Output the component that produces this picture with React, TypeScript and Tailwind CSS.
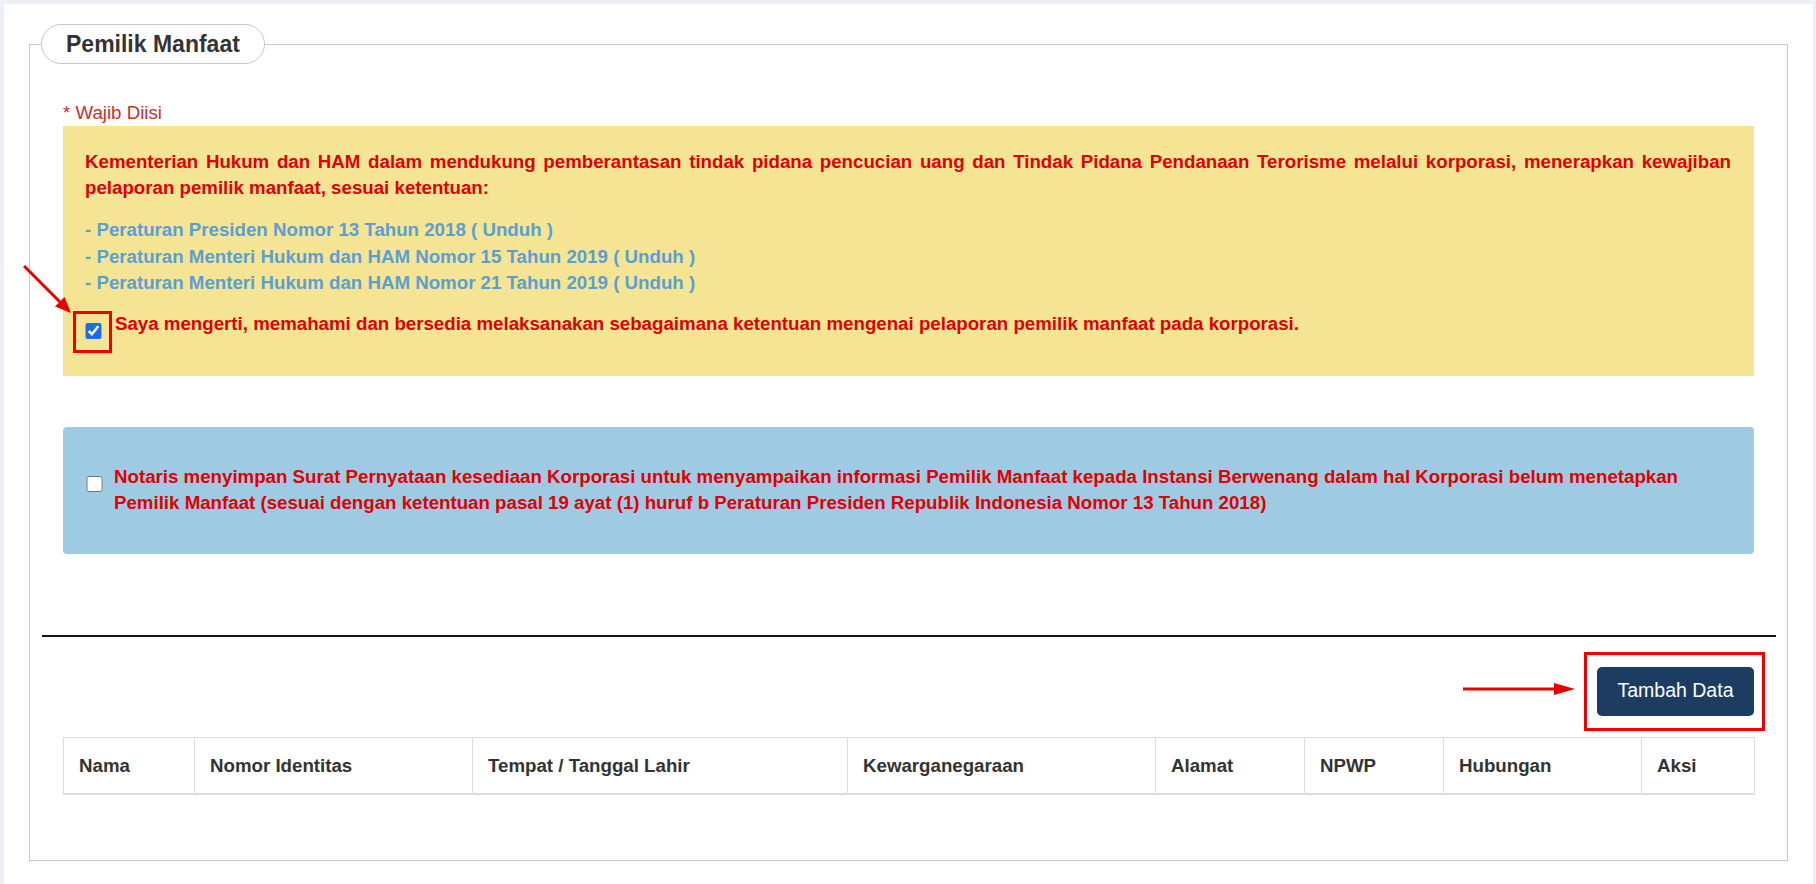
import React from "react";

const font = { fontFamily: '"Liberation Sans", Arial, sans-serif' };

function Arrow1() {
  return (
    <svg className="absolute left-[-62px] top-[-58px] pointer-events-none" width="50" height="50" viewBox="0 0 50 50">
      <line x1="1" y1="1" x2="38" y2="38" stroke="#e80000" strokeWidth="3" />
      <polygon points="48,48 41.5,32 32,41.5" fill="#e80000" />
    </svg>
  );
}

function Arrow2() {
  return (
    <svg className="absolute left-[-134px] top-[14px] pointer-events-none" width="112" height="16" viewBox="0 0 112 16">
      <line x1="0" y1="8" x2="94" y2="8" stroke="#e80000" strokeWidth="3" />
      <polygon points="112,8 91,2 91,14" fill="#e80000" />
    </svg>
  );
}

const cols: { label: string; w: string }[] = [
  { label: "Nama", w: "w-[131px]" },
  { label: "Nomor Identitas", w: "w-[278px]" },
  { label: "Tempat / Tanggal Lahir", w: "w-[375px]" },
  { label: "Kewarganegaraan", w: "w-[308px]" },
  { label: "Alamat", w: "w-[149px]" },
  { label: "NPWP", w: "w-[139px]" },
  { label: "Hubungan", w: "w-[198px]" },
  { label: "Aksi", w: "w-[113px]" },
];

export default function App() {
  return (
    <div
      style={font}
      className="w-[1816px] h-[884px] bg-[#edf0f5] pt-[4px] pl-[4px] pr-[3px] overflow-hidden text-[18.7px]"
    >
      <div className="bg-white h-full pt-[20px] px-[25px]">
        <fieldset className="border border-[#c8c8c8] p-0 m-0 min-w-0">
          <legend className="ml-[11px] h-[40px] px-[24px] rounded-full border border-[#c8c8c8] bg-white text-[23px] leading-[38px] font-bold text-[#333]">
            Pemilik Manfaat
          </legend>
          <div className="px-[33px] pb-[65px]">
            <div className="mt-[36px] leading-[26px] text-[#c9302c]">* Wajib Diisi</div>

            <div className="bg-[#f5e494] pl-[22px] pr-[23px] pt-[23px] pb-[37px]">
              <div className="font-bold text-[#e00000] leading-[26px]">
                <div className="text-justify [text-align-last:justify]">
                  Kementerian Hukum dan HAM dalam mendukung pemberantasan tindak pidana pencucian uang dan Tindak Pidana Pendanaan Terorisme melalui korporasi, menerapkan kewajiban
                </div>
                <div>pelaporan pemilik manfaat, sesuai ketentuan:</div>
              </div>
              <div className="mt-[16px] font-bold text-[#5b9fd2] leading-[26.5px]">
                <div>- Peraturan Presiden Nomor 13 Tahun 2018 ( Unduh )</div>
                <div>- Peraturan Menteri Hukum dan HAM Nomor 15 Tahun 2019 ( Unduh )</div>
                <div>- Peraturan Menteri Hukum dan HAM Nomor 21 Tahun 2019 ( Unduh )</div>
              </div>
              <div className="mt-[14px] flex items-start">
                <span className="relative mt-[12px] flex shrink-0">
                  <input
                    type="checkbox"
                    checked
                    readOnly
                    className="m-0 w-[17px] h-[16px] accent-[#1a6fe0]"
                  />
                  <span className="absolute left-[-12px] top-[-12px] right-[-10px] bottom-[-14px] border-[3px] border-[#ee0000] pointer-events-none" />
                  <Arrow1 />
                </span>
                <span className="ml-[13px] font-bold text-[#e00000] leading-[26px]">
                  Saya mengerti, memahami dan bersedia melaksanakan sebagaimana ketentuan mengenai pelaporan pemilik manfaat pada korporasi.
                </span>
              </div>
            </div>

            <div className="mt-[51px] bg-[#9ecbe3] rounded-[4px] pl-[23px] pr-[20px] py-[37px] flex items-start">
              <input type="checkbox" readOnly className="mt-[12px] m-0 w-[17px] h-[16px] shrink-0" />
              <span className="ml-[11px] font-bold text-[#e00000] leading-[26.5px]">
                Notaris menyimpan Surat Pernyataan kesediaan Korporasi untuk menyampaikan informasi Pemilik Manfaat kepada Instansi Berwenang dalam hal Korporasi belum menetapkan
                <br />
                Pemilik Manfaat (sesuai dengan ketentuan pasal 19 ayat (1) huruf b Peraturan Presiden Republik Indonesia Nomor 13 Tahun 2018)
              </span>
            </div>

            <div className="mt-[81px] -ml-[21px] -mr-[22px] h-[2px] bg-[#151515]" />

            <div className="mt-[30px] flex justify-end">
              <div className="relative">
                <button className="w-[157px] h-[49px] rounded-[5px] bg-[#1c3d61] text-white text-[19.5px]">
                  Tambah Data
                </button>
                <span className="absolute left-[-13px] right-[-11px] top-[-15px] bottom-[-15px] border-[3px] border-[#ee0000] pointer-events-none" />
                <Arrow2 />
              </div>
            </div>

            <table className="mt-[21px] w-full table-fixed border-collapse border border-[#dddddd]">
              <thead>
                <tr>
                  {cols.map((c) => (
                    <th
                      key={c.label}
                      className={`${c.w} text-left font-bold text-[#333] px-[15px] py-[15px] leading-[25px] border border-[#dddddd] border-b-2`}
                    >
                      {c.label}
                    </th>
                  ))}
                </tr>
              </thead>
            </table>
          </div>
        </fieldset>
      </div>
    </div>
  );
}
